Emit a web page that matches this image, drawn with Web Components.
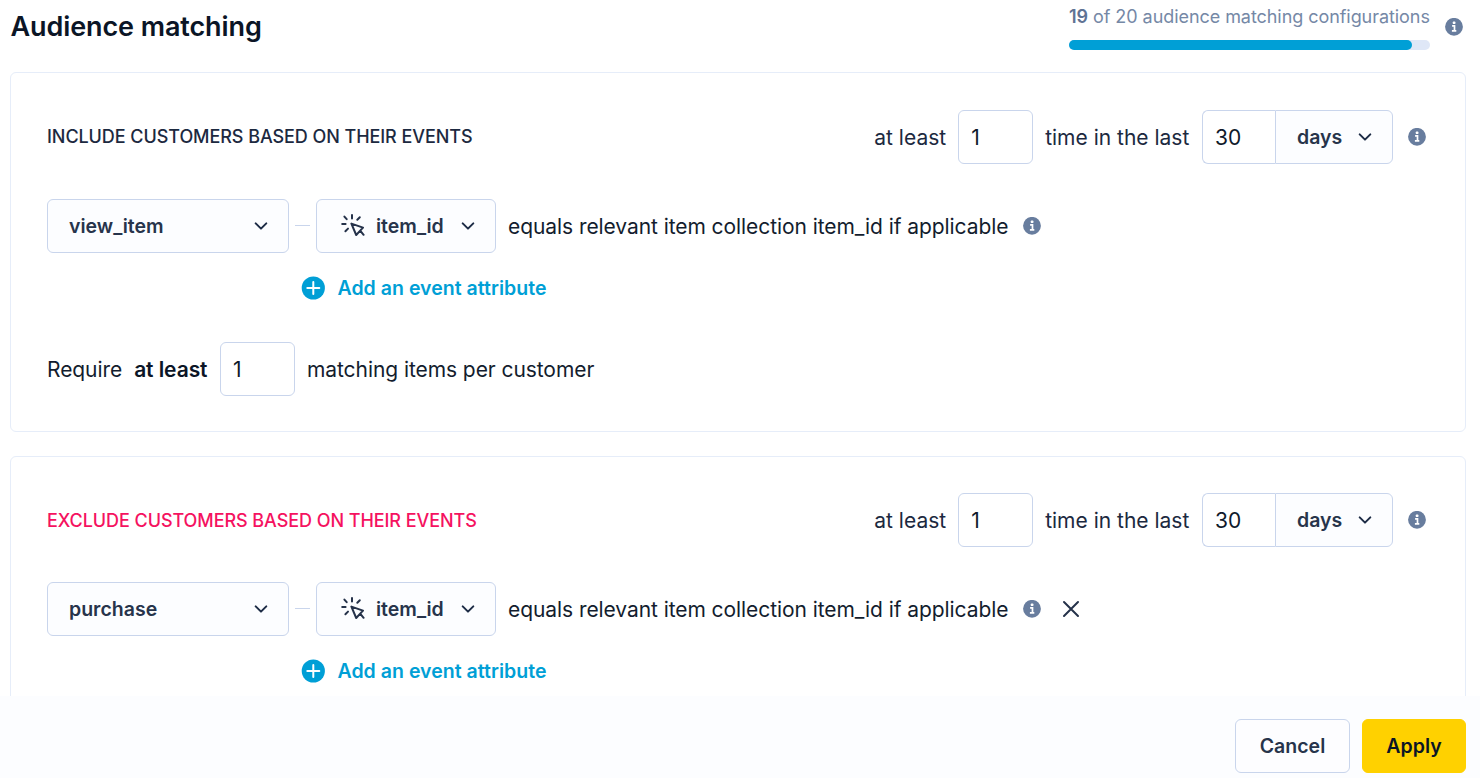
<!DOCTYPE html>
<html lang="en">
<head>
<meta charset="utf-8">
<title>Audience matching</title>
<style>
	html, body {
		margin: 0;
		height: 100%;
		overflow: hidden;
		background: #fff;
		color: #1c2733;
		font-family: Inter, "Liberation Sans", sans-serif;
	}
</style>
</head>
<body>
<audience-page>
	<page-header slot="header" heading="Audience matching">
		<usage-meter used="19" total="20">audience matching configurations</usage-meter>
		<info-icon></info-icon>
	</page-header>

	<rule-card>
		<rule-title slot="title">INCLUDE CUSTOMERS BASED ON THEIR EVENTS</rule-title>
		<time-window slot="window" times="1" amount="30" unit="days"></time-window>
		<event-row event="view_item" attribute="item_id">equals relevant item collection item_id if applicable</event-row>
		<add-link>Add an event attribute</add-link>
		<require-row count="1"></require-row>
	</rule-card>

	<rule-card kind="exclude">
		<rule-title slot="title" kind="exclude">EXCLUDE CUSTOMERS BASED ON THEIR EVENTS</rule-title>
		<time-window slot="window" times="1" amount="30" unit="days"></time-window>
		<event-row event="purchase" attribute="item_id" removable>equals relevant item collection item_id if applicable</event-row>
		<add-link>Add an event attribute</add-link>
		<require-row count="1"></require-row>
	</rule-card>

	<action-button slot="actions">Cancel</action-button>
	<action-button slot="actions" kind="primary">Apply</action-button>
</audience-page>

<script>
function define(name, render) {
	window.customElements.define(name, class extends HTMLElement {
		constructor() {
			super();
			this._root = this.attachShadow({mode: 'open'});
			this._root.innerHTML = render(this);
		}
	});
}

define('info-icon', () => `
	<style>
		:host { display: block; flex: none; width: 18px; height: 18px; }
		svg { display: block; }
	</style>
	<svg width="18" height="18" viewBox="0 0 18 18">
		<circle cx="9" cy="8.8" r="8.9" fill="#687d9e"/>
		<rect x="7.8" y="3.6" width="2.6" height="2.5" rx=".7" fill="#fff"/>
		<path d="M7.1 7.9H9.5V12.6M6.9 12.8H11.3" fill="none" stroke="#fff" stroke-width="1.7"/>
	</svg>
`);

define('chevron-icon', () => `
	<style>
		:host { display: block; flex: none; width: 14px; height: 14px; }
		svg { display: block; }
	</style>
	<svg width="14" height="14" viewBox="0 0 14 14">
		<path d="M1.7 4.4L7 9.6L12.3 4.4" fill="none" stroke="#1c2b45" stroke-width="2" stroke-linecap="round" stroke-linejoin="round"/>
	</svg>
`);

define('click-icon', () => `
	<style>
		:host { display: block; flex: none; width: 24px; height: 24px; }
		svg { display: block; }
	</style>
	<svg width="24" height="24" viewBox="0 0 24 24" fill="none" stroke="#25324a" stroke-width="2" stroke-linecap="round" stroke-linejoin="round">
		<path d="M11 1V4.6M3.4 2.6L5.7 5.2M18.8 3.2L16.3 5.7M1.2 10H4.6M7 14.6L4.4 17.2"/>
		<path d="M19.2 16.6L15.2 21L10.4 9.6L22 13.6L19.2 16.6L22.6 20.8"/>
	</svg>
`);

define('number-field', el => `
	<style>
		:host {
			display: flex;
			align-items: center;
			box-sizing: border-box;
			flex: none;
			width: 75px;
			height: 54px;
			padding: 1px 0 0 12px;
			border: 1px solid #c9d5ec;
			border-radius: 6px;
			background: #fff;
			color: #0f1a2b;
			font-size: 21px;
			line-height: 30px;
		}
	</style>
	<span>${el.getAttribute('value')}</span>
`);

define('select-field', () => `
	<style>
		:host {
			display: flex;
			align-items: center;
			box-sizing: border-box;
			flex: none;
			height: 54px;
			padding: 0 20px 0 21px;
			border: 1px solid #c9d5ec;
			border-radius: 6px;
			background: #fcfdff;
			color: #27344b;
			font-size: 19.5px;
			font-weight: 600;
			line-height: 30px;
			white-space: nowrap;
		}
		chevron-icon { margin-left: auto; }
	</style>
	<slot></slot>
	<chevron-icon></chevron-icon>
`);

define('usage-meter', el => `
	<style>
		:host {
			display: block;
			width: 361px;
			color: #7588a6;
			font-size: 18px;
			letter-spacing: -0.06px;
			line-height: 24px;
			white-space: nowrap;
		}
		b { font-weight: 600; color: #5f7394; }
		.track {
			height: 10px;
			margin-top: 11px;
			border-radius: 5px;
			background: #dfe7f7;
		}
		.fill {
			width: ${el.getAttribute('used') / el.getAttribute('total') * 100}%;
			height: 10px;
			border-radius: 5px;
			background: #009fd6;
		}
	</style>
	<span class="label"><b>${el.getAttribute('used')}</b> of ${el.getAttribute('total')} <slot></slot></span>
	<div class="track"><div class="fill"></div></div>
`);

define('page-header', el => `
	<style>
		:host {
			display: flex;
			justify-content: space-between;
			height: 72px;
			padding: 0 17px 0 10.5px;
			box-sizing: border-box;
		}
		h1 {
			margin: 11px 0 0;
			color: #0b1526;
			font-size: 27px;
			font-weight: 600;
			letter-spacing: -0.1px;
			line-height: 32px;
			white-space: nowrap;
		}
		.usage { display: flex; gap: 15px; padding-top: 5px; }
		::slotted(info-icon) { margin-top: 12.5px; }
	</style>
	<h1>${el.getAttribute('heading')}</h1>
	<div class="usage"><slot></slot></div>
`);

define('rule-title', () => `
	<style>
		:host {
			display: block;
			color: #1c2940;
			font-size: 18px;
			font-weight: 500;
			letter-spacing: -0.07px;
			line-height: 24px;
			white-space: nowrap;
		}
		:host([kind=exclude]) { padding-top: 1px; color: #f5125f; }
	</style>
	<slot></slot>
`);

define('time-window', el => `
	<style>
		:host {
			display: flex;
			align-items: center;
			color: #1c2940;
			font-size: 21px;
			line-height: 30px;
			white-space: nowrap;
		}
		span { padding-top: 1px; }
		.times { margin: 0 12px; }
		.amount {
			width: 73px;
			margin-left: 12.7px;
			border-right: 0;
			border-radius: 6px 0 0 6px;
		}
		.unit {
			width: 118px;
			border-radius: 0 6px 6px 0;
		}
		info-icon { margin-left: 15px; }
	</style>
	<span>at least</span>
	<number-field class="times" value="${el.getAttribute('times')}"></number-field>
	<span>time in the last</span>
	<number-field class="amount" value="${el.getAttribute('amount')}"></number-field>
	<select-field class="unit">${el.getAttribute('unit')}</select-field>
	<info-icon></info-icon>
`);

define('event-row', el => `
	<style>
		:host {
			display: flex;
			align-items: center;
			margin-top: 35px;
			color: #131d2e;
			font-size: 21px;
			line-height: 30px;
			white-space: nowrap;
		}
		.event { width: 242px; }
		.dash {
			width: 15px;
			height: 1px;
			margin: 0 6px 2px;
			background: #c9d5ec;
		}
		.attribute { width: 180px; margin-right: 12px; padding-left: 24px; }
		.condition { padding-top: 1px; letter-spacing: -0.07px; }
		click-icon { margin-right: 11px; }
		info-icon { margin-left: 15px; }
		.remove { margin-left: 21px; }
	</style>
	<select-field class="event">${el.getAttribute('event')}</select-field>
	<span class="dash"></span>
	<select-field class="attribute"><click-icon></click-icon>${el.getAttribute('attribute')}</select-field>
	<span class="condition"><slot></slot></span>
	<info-icon></info-icon>
	${el.hasAttribute('removable') ? `
		<svg class="remove" width="18" height="18" viewBox="0 0 18 18">
			<path d="M2 2L16 16M16 2L2 16" stroke="#25324a" stroke-width="2" stroke-linecap="round"/>
		</svg>
	` : ''}
`);

define('add-link', () => `
	<style>
		:host {
			display: flex;
			align-items: center;
			gap: 12.5px;
			height: 30px;
			margin: 20px 0 0 254px;
			color: #009fd6;
			font-size: 19.5px;
			font-weight: 600;
			letter-spacing: 0.03px;
			line-height: 30px;
			white-space: nowrap;
		}
	</style>
	<svg width="24" height="24" viewBox="0 0 24 24">
		<circle cx="12.3" cy="12" r="11.6" fill="#009fd6"/>
		<path d="M12.3 6V18M6.3 12H18.3" stroke="#fff" stroke-width="2" stroke-linecap="round"/>
	</svg>
	<span><slot></slot></span>
`);

define('require-row', el => `
	<style>
		:host {
			display: flex;
			align-items: center;
			margin-top: 39px;
			color: #131d2e;
			font-size: 21px;
			letter-spacing: -0.07px;
			line-height: 30px;
			white-space: nowrap;
		}
		span, b { padding-top: 1px; }
		b { margin: 0 12.5px 0 12px; font-weight: 600; color: #0b1526; }
		number-field { margin-right: 12px; }
	</style>
	<span>Require</span>
	<b>at least</b>
	<number-field value="${el.getAttribute('count')}"></number-field>
	<span>matching items per customer</span>
`);

define('rule-card', () => `
	<style>
		:host {
			display: block;
			box-sizing: border-box;
			width: 1456px;
			height: 360px;
			margin: 0 0 24px 10px;
			padding: 37px 39px 0 36px;
			border: 1px solid #e6edf9;
			border-radius: 6px;
		}
		:host([kind=exclude]) { padding-top: 36px; }
		.head {
			display: flex;
			align-items: center;
			justify-content: space-between;
		}
	</style>
	<div class="head"><slot name="title"></slot><slot name="window"></slot></div>
	<slot></slot>
`);

define('action-button', () => `
	<style>
		:host {
			display: flex;
			align-items: center;
			justify-content: center;
			box-sizing: border-box;
			width: 115px;
			height: 54px;
			border: 1px solid #c9d5ec;
			border-radius: 6px;
			background: #fdfdff;
			color: #27344b;
			font-size: 19.5px;
			font-weight: 600;
			line-height: 30px;
		}
		:host([kind=primary]) {
			width: 104px;
			border-color: #ffd100;
			background: #ffd100;
			color: #0b1526;
		}
	</style>
	<span><slot></slot></span>
`);

define('audience-page', () => `
	<style>
		:host { display: flex; flex-direction: column; height: 778px; }
		main { flex: 1; min-height: 0; overflow: hidden; }
		footer {
			display: flex;
			justify-content: flex-end;
			gap: 12px;
			flex: none;
			box-sizing: border-box;
			height: 82px;
			padding: 23px 14px 0 0;
			background: #fcfdff;
		}
	</style>
	<main>
		<slot name="header"></slot>
		<slot></slot>
	</main>
	<footer><slot name="actions"></slot></footer>
`);
</script>
</body>
</html>
